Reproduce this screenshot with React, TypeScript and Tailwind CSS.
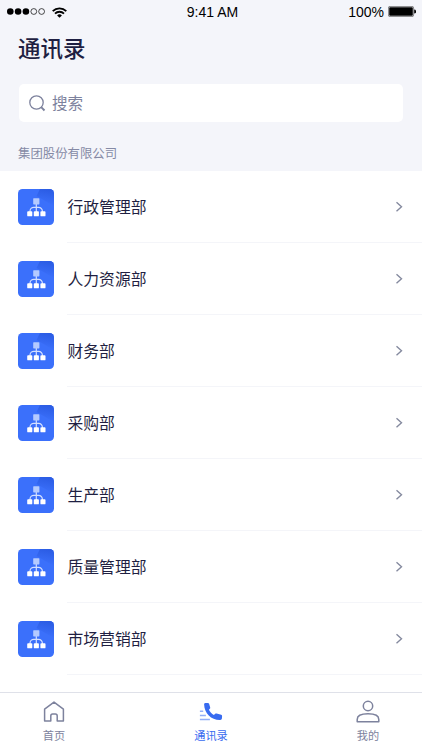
import { useState } from 'react';
import clsx from 'clsx';

const departments = [
  '行政管理部',
  '人力资源部',
  '财务部',
  '采购部',
  '生产部',
  '质量管理部',
  '市场营销部',
];

const StatusBar = () => (
  <div className="relative flex h-6 items-center justify-between pl-[7px] pr-[6px] text-black">
    <div className="flex items-center">
      <svg width="39" height="8" viewBox="0 0 39 8">
        <circle cx="3.3" cy="3.5" r="3.3" />
        <circle cx="11.1" cy="3.5" r="3.3" />
        <circle cx="18.9" cy="3.5" r="3.3" />
        <circle cx="26.8" cy="3.5" r="2.9" fill="none" stroke="currentColor" strokeWidth="0.7" />
        <circle cx="34.6" cy="3.5" r="2.9" fill="none" stroke="currentColor" strokeWidth="0.7" />
      </svg>
      <svg className="ml-[6px]" width="15" height="11" viewBox="0 0 15 11" fill="none" stroke="currentColor" strokeWidth="1.8">
        <path d="M0.7 4.1a9.7 9.7 0 0 1 13.6 0" />
        <path d="M3 6.6a6.4 6.4 0 0 1 9 0" />
        <path d="M7.5 10.8 5.1 8.5a3.4 3.4 0 0 1 4.8 0z" fill="currentColor" stroke="none" />
      </svg>
    </div>
    <span className="absolute left-0 w-full pl-[3px] text-center text-[14px] leading-6">9:41 AM</span>
    <div className="flex items-center gap-1">
      <span className="text-[14px]">100%</span>
      <svg className="-mt-px" width="28" height="11" viewBox="0 0 28 11">
        <rect x="0.4" y="0.4" width="25.2" height="10.2" rx="1.5" fill="none" stroke="#555" strokeWidth="0.7" />
        <rect x="1.2" y="1.2" width="23.6" height="8.6" rx="0.8" />
        <path d="M26.2 3.5a2 2 0 0 1 0 4z" />
      </svg>
    </div>
  </div>
);

const DepartmentIcon = () => (
  <svg className="shrink-0" width="36" height="36" viewBox="0 0 36 36" fill="none">
    <defs>
      <linearGradient id="corner" x1="28" y1="0" x2="25" y2="15" gradientUnits="userSpaceOnUse">
        <stop stopColor="#2b5ce4" />
        <stop offset="1" stopColor="#3b70fb" />
      </linearGradient>
    </defs>
    <rect width="36" height="36" rx="4.5" fill="#3b70fb" />
    <path d="M22 0h9.5A4.5 4.5 0 0 1 36 4.5V17L18.500 7z" fill="url(#corner)" />
    <path d="M18.3 14v10M12 23v-.8a3.8 3.8 0 0 1 3.8-3.8h4.8a3.8 3.8 0 0 1 3.8 3.8v.8" stroke="#d3dfff" strokeWidth="1.2" />
    <rect x="15.2" y="9.2" width="6.2" height="6.2" rx="0.6" fill="#b4caff" />
    <rect x="9.2" y="22.2" width="5.1" height="5.1" rx="0.9" fill="#fff" />
    <rect x="15.8" y="22.2" width="5.1" height="5.1" rx="0.9" fill="#fff" />
    <rect x="22.4" y="22.2" width="5.1" height="5.1" rx="0.9" fill="#fff" />
  </svg>
);

const HomeIcon = () => (
  <svg width="24" height="24" viewBox="0 0 24 24" fill="none" stroke="#7d829d" strokeWidth="1.5" strokeLinejoin="round">
    <path d="M2.6 9.2 12 2.1l9.400 7.100v11.900h-6.200v-5.200a1.800 1.800 0 0 0-1.800-1.800h-2.800a1.800 1.800 0 0 0-1.800 1.800v5.200H2.600z" />
  </svg>
);

const ContactsIcon = () => (
  <svg width="24" height="24" viewBox="0 0 24 24" fill="none">
    <path
      d="M6.300 3 8.900 2.900c.6 0 1 .3 1.200.8l1.100 3.700c.2.600 0 1-.4 1.400l-.9.900c1.100 2.200 2.800 4 5 5.200l1.300-1.100c.4-.3.900-.4 1.400-.3l4.600 1.200c.6.200.9.600.9 1.200l-.2 2.700c-.1.900-.7 1.400-1.600 1.400C12.500 20.300 5.300 13.700 5.100 4.300c0-.7.400-1.200 1.200-1.300z"
      fill="#386bf0"
    />
    <path d="M.9 11.300h3.300M.9 15.500h6M.9 19.600h10" stroke="#91aef8" strokeWidth="1.500" />
  </svg>
);

const ProfileIcon = () => (
  <svg width="24" height="24" viewBox="0 0 24 24" fill="none" stroke="#7d829d" strokeWidth="1.5" strokeLinejoin="round">
    <circle cx="12" cy="6" r="4.700" />
    <path d="M1.200 21.700v-2.300c0-3.600 4.400-5.600 10.800-5.600s10.800 2 10.800 5.600v2.300z" />
  </svg>
);

const tabs = [
  { id: 'home', label: '首页', Icon: HomeIcon, width: 'w-[108px]' },
  { id: 'contacts', label: '通讯录', Icon: ContactsIcon, width: 'flex-1' },
  { id: 'profile', label: '我的', Icon: ProfileIcon, width: 'w-[108px]' },
];

const App = () => {
  const [activeTab, setActiveTab] = useState('contacts');

  return (
    <div className="flex h-[750px] w-full flex-col overflow-hidden bg-white font-['Liberation_Sans','Noto_Sans_CJK_SC',sans-serif] text-[#1f1f42]">
      <header className="h-[171px] shrink-0 bg-[#f4f5fa]">
        <StatusBar />
        <h1 className="ml-[18px] mt-[9px] text-[22.5px] font-medium leading-[34px]">通讯录</h1>
        <label className="mx-[19px] mt-[17px] flex h-[38px] items-center rounded-[5px] bg-white pl-[10px]">
          <svg className="shrink-0" width="17" height="17" viewBox="0 0 17 17" fill="none" stroke="#7d829d">
            <circle cx="7.5" cy="7.5" r="6.7" strokeWidth="1.3" />
            <path d="m12.2 12.2 3.3 3.3" strokeWidth="1.9" />
          </svg>
          <input
            type="text"
            placeholder="搜索"
            className="ml-[6px] w-full bg-transparent pt-[2px] text-[15.5px] outline-none placeholder:text-[#7d829d]"
          />
        </label>
        <p className="ml-[18px] mt-[22px] text-[12.4px] leading-5 text-[#858aa5]">集团股份有限公司</p>
      </header>

      <main className="min-h-0 flex-1 overflow-hidden">
        {departments.map((name) => (
          <div key={name} className="flex h-[72px] items-center pl-[18px]">
            <DepartmentIcon />
            <div className="ml-[13px] flex h-full flex-1 items-center justify-between border-b border-[#f4f5f9] pr-[18px]">
              <span className="pl-[0.5px] pt-[2px] text-[15.8px]">{name}</span>
              <svg width="10" height="12" viewBox="0 0 10 12" fill="none" stroke="#858a9f" strokeWidth="1.4">
                <path d="m2.5 1.3 5 4.5-5 4.5" />
              </svg>
            </div>
          </div>
        ))}
      </main>

      <nav className="flex h-[58px] shrink-0 border-t border-[#dfe1e9] bg-white">
        {tabs.map(({ id, label, Icon, width }) => (
          <button
            key={id}
            onClick={() => setActiveTab(id)}
            className={clsx(
              'flex flex-col items-center pt-[7px] text-[11.2px] leading-4',
              width,
              activeTab === id ? 'text-[#386bf0]' : 'text-[#7d829d]'
            )}
          >
            <Icon />
            <span className="mt-[4px]">{label}</span>
          </button>
        ))}
      </nav>
    </div>
  );
};

export default App;
